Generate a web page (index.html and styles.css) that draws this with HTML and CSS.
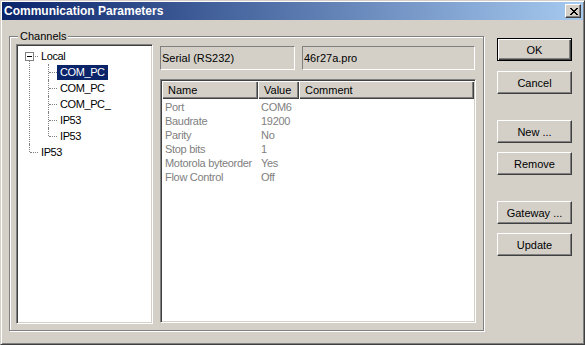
FILE: index.html
```html
<!DOCTYPE html>
<html lang="en">
<head>
  <meta charset="UTF-8">
  <title>Communication Parameters</title>
  <link rel="stylesheet" href="styles.css">
</head>
<body>
  <div class="window">
    <div class="titlebar">
      <span class="title">Communication Parameters</span>
      <button class="close-btn" title="Close">
        <svg width="8" height="7" viewBox="0 0 8 7" shape-rendering="crispEdges">
          <path fill="#000" d="M0 0h2v1H0z M6 0h2v1H6z M1 1h2v1H1z M5 1h2v1H5z M2 2h4v1H2z M3 3h2v1H3z M2 4h4v1H2z M1 5h2v1H1z M5 5h2v1H5z M0 6h2v1H0z M6 6h2v1H6z"/>
        </svg>
      </button>
    </div>

    <div class="client">
      <div class="group">
        <div class="group-label">Channels</div>
        <div class="group-body">
          <div class="tree">
            <ul class="tree-root">
              <li>
                <div class="tree-row"><span class="expander"></span><span class="node">Local</span></div>
                <ul>
                  <li><div class="tree-row"><span class="node selected">COM_PC</span></div></li>
                  <li><div class="tree-row"><span class="node">COM_PC</span></div></li>
                  <li><div class="tree-row"><span class="node">COM_PC_</span></div></li>
                  <li><div class="tree-row"><span class="node">IP53</span></div></li>
                  <li><div class="tree-row"><span class="node">IP53</span></div></li>
                </ul>
              </li>
              <li><div class="tree-row"><span class="node">IP53</span></div></li>
            </ul>
          </div>

          <div class="panel">
            <div class="fields">
              <div class="field field-type">Serial (RS232)</div>
              <div class="field field-file">46r27a.pro</div>
            </div>
            <div class="list">
              <table>
                <colgroup>
                  <col class="col-name">
                  <col class="col-value">
                  <col>
                </colgroup>
                <thead>
                  <tr><th>Name</th><th>Value</th><th>Comment</th></tr>
                </thead>
                <tbody>
                  <tr><td>Port</td><td>COM6</td><td></td></tr>
                  <tr><td>Baudrate</td><td>19200</td><td></td></tr>
                  <tr><td>Parity</td><td>No</td><td></td></tr>
                  <tr><td>Stop bits</td><td>1</td><td></td></tr>
                  <tr><td>Motorola byteorder</td><td>Yes</td><td></td></tr>
                  <tr><td>Flow Control</td><td>Off</td><td></td></tr>
                </tbody>
              </table>
            </div>
          </div>
        </div>
      </div>

      <div class="buttons">
        <button class="btn default">OK</button>
        <button class="btn">Cancel</button>
        <button class="btn gap">New ...</button>
        <button class="btn">Remove</button>
        <button class="btn gap">Gateway ...</button>
        <button class="btn">Update</button>
      </div>
    </div>
  </div>
</body>
</html>
```

FILE: styles.css
```css
body {
  margin: 0;
  background: #d4d0c8;
  font-family: 'Liberation Sans', Arial, sans-serif;
  font-size: 11px;
  color: #000;
}
.window {
  width: 585px;
  height: 345px;
  box-sizing: border-box;
  padding: 1px;
  background: #d4d0c8;
  border: 1px solid;
  border-color: #d4d0c8 #404040 #404040 #d4d0c8;
  box-shadow: inset 1px 1px #fff, inset -1px -1px #808080;
}
.titlebar {
  display: flex;
  align-items: center;
  height: 18px;
  padding-left: 2px;
  background: linear-gradient(to right, #0a246a, #a6caf0);
}
.title {
  color: #fff;
  font-weight: bold;
  font-size: 12px;
  line-height: 18px;
}
.close-btn {
  display: flex;
  align-items: center;
  justify-content: center;
  margin-left: auto;
  margin-right: 2px;
  width: 16px;
  height: 14px;
  padding: 0 0 0 1px;
  box-sizing: border-box;
  background: #d4d0c8;
  border: 1px solid;
  border-color: #fff #404040 #404040 #fff;
  box-shadow: inset -1px -1px #808080;
}
.client {
  display: flex;
  padding-left: 7px;
}

/* group box */
.group {
  display: flex;
  flex-direction: column;
  width: 475px;
  height: 295px;
  box-sizing: border-box;
  margin-top: 16px;
  border: 1px solid #808080;
  box-shadow: inset 1px 1px #fff, 1px 1px #fff;
}
.group-label {
  align-self: flex-start;
  height: 13px;
  line-height: 13px;
  margin: -7px 0 0 8px;
  padding: 0 2px;
  background: #d4d0c8;
}
.group-body {
  display: flex;
  gap: 7px;
  padding: 1px 7px 0 6px;
}

/* tree view */
.tree {
  width: 137px;
  height: 280px;
  box-sizing: border-box;
  background: #fff;
  border: 1px solid;
  border-color: #808080 #fff #fff #808080;
  box-shadow: inset 1px 1px #404040, inset -1px -1px #d4d0c8;
  padding: 1px;
}
.tree ul {
  list-style: none;
  margin: 0;
  padding: 0;
}
.tree-root {
  padding-top: 2px !important;
}
.tree li {
  position: relative;
  padding-left: 20px;
}
.tree li ul {
  margin-left: -1px;
}
.tree li::before {
  content: "";
  position: absolute;
  left: 11px;
  top: 0;
  bottom: 0;
  border-left: 1px dotted #808080;
}
.tree li::after {
  content: "";
  position: absolute;
  left: 12px;
  top: 8px;
  width: 8px;
  border-top: 1px dotted #808080;
}
.tree-root > li:first-child::before {
  top: 8px;
}
.tree li:last-child::before {
  bottom: auto;
  height: 8px;
}
.tree-row {
  height: 16px;
}
.node {
  display: inline-block;
  height: 15px;
  line-height: 15px;
  margin-top: 1px;
  padding: 0 3px;
  letter-spacing: -0.4px;
  white-space: nowrap;
}
.node.selected {
  background: #0a246a;
  color: #fff;
}
.expander {
  position: absolute;
  left: 7px;
  top: 4px;
  z-index: 1;
  width: 9px;
  height: 9px;
  box-sizing: border-box;
  border: 1px solid #808080;
  background: #fff;
}
.expander::before {
  content: "";
  position: absolute;
  left: 1px;
  top: 3px;
  width: 5px;
  height: 1px;
  background: #000;
}

/* right side */
.panel {
  display: flex;
  flex-direction: column;
  width: 316px;
}
.fields {
  display: flex;
  gap: 7px;
  margin-top: 2px;
  padding-right: 1px;
}
.field {
  height: 24px;
  box-sizing: border-box;
  line-height: 22px;
  padding-left: 1px;
  border: 1px solid;
  border-color: #808080 #fff #fff #808080;
  white-space: nowrap;
}
.field-type {
  width: 135px;
}
.field-file {
  flex: 1;
}
.list {
  margin-top: 9px;
  height: 244px;
  box-sizing: border-box;
  background: #fff;
  border: 1px solid;
  border-color: #808080 #fff #fff #808080;
  box-shadow: inset 1px 1px #404040, inset -1px -1px #d4d0c8;
  padding: 1px;
}
.list table {
  width: 100%;
  table-layout: fixed;
  border-collapse: separate;
  border-spacing: 0;
}
.col-name { width: 96px; }
.col-value { width: 41px; }
.list th {
  height: 18px;
  padding: 0 0 0 6px;
  font-weight: normal;
  text-align: left;
  background: #d4d0c8;
  box-shadow: inset 1px 1px #fff, inset -1px -1px #404040, inset -2px -2px #808080;
  white-space: nowrap;
}
.list tbody tr:first-child td {
  padding-top: 1px;
}
.list td {
  height: 14px;
  line-height: 14px;
  padding: 0 0 0 3px;
  color: #808080;
  letter-spacing: -0.3px;
  white-space: nowrap;
  overflow: hidden;
}

/* buttons */
.buttons {
  display: flex;
  flex-direction: column;
  width: 75px;
  margin-left: 13px;
  padding-top: 18px;
}
.btn {
  height: 23px;
  box-sizing: border-box;
  padding: 0;
  font-family: 'Liberation Sans', Arial, sans-serif;
  font-size: 11px;
  color: #000;
  background: #d4d0c8;
  border: 1px solid;
  border-color: #fff #404040 #404040 #fff;
  box-shadow: inset -1px -1px #808080;
}
.btn + .btn {
  margin-top: 9px;
}
.btn.default {
  border-color: #000;
  box-shadow: inset 1px 1px #fff, inset -1px -1px #404040, inset -2px -2px #808080;
}
.btn.default + .btn {
  margin-top: 10px;
}
.btn.gap {
  margin-top: 26px;
}
```
